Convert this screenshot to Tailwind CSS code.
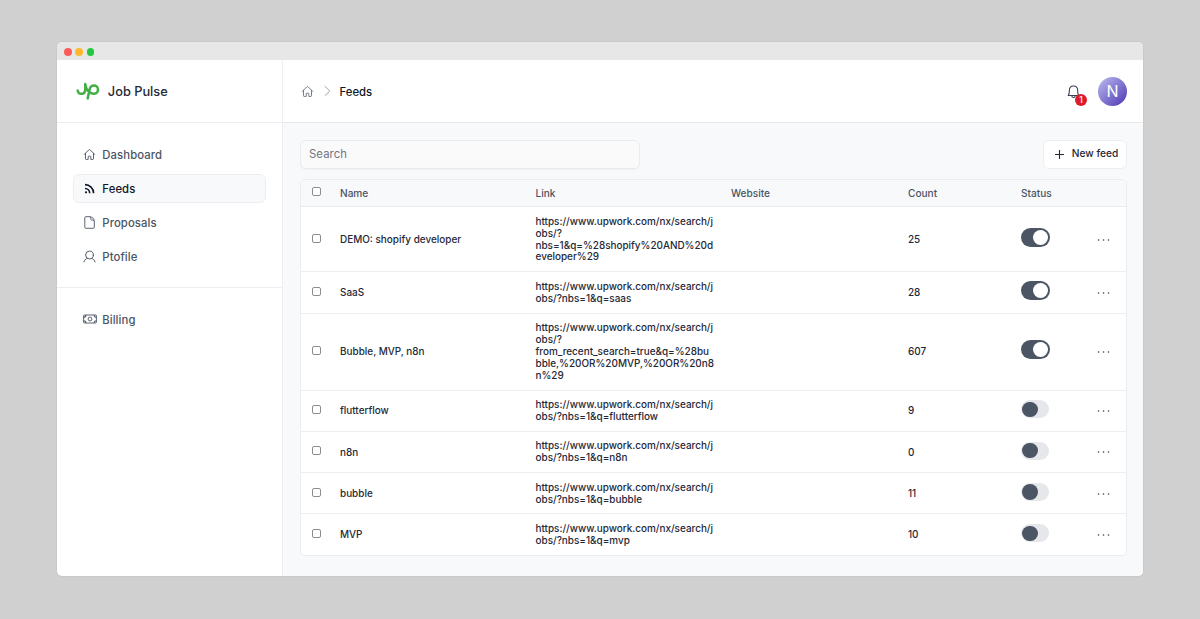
<!DOCTYPE html>
<html lang="en">
<head>
<meta charset="utf-8">
<title>Job Pulse</title>
<script src="https://cdn.jsdelivr.net/npm/@tailwindcss/browser@4"></script>
</head>
<body class="h-[619px] overflow-hidden bg-[#d0d0d0] px-[57px] pt-[42.4px] font-['Inter',sans-serif] text-[#1f2937]">
<svg class="hidden">
  <symbol id="home" viewBox="0 0 24 24"><path d="M2.5 11.8 10.6 3.6a2 2 0 0 1 2.8 0l8.1 8.2M4.6 9.8v10.1c0 .7.5 1.2 1.2 1.2h3.8v-4.9c0-.7.5-1.2 1.2-1.2h2.4c.7 0 1.2.5 1.2 1.2v4.9h3.8c.7 0 1.2-.5 1.2-1.2V9.8" fill="none" stroke="currentColor" stroke-width="1.7" stroke-linecap="round" stroke-linejoin="round"/></symbol>
</svg>
<div class="flex h-[534px] w-[1086.4px] flex-col overflow-hidden rounded-[5px] bg-white shadow-[0_0_2px_rgba(0,0,0,0.12)]">
  <div class="flex h-[18px] shrink-0 items-center gap-[3.8px] bg-[#e7e7e7] pt-[1px] pl-[7px]">
    <span class="size-[7.6px] rounded-full bg-[#fc5b57]"></span>
    <span class="size-[7.6px] rounded-full bg-[#fdb82d]"></span>
    <span class="size-[7.6px] rounded-full bg-[#24c83f]"></span>
  </div>
  <div class="flex min-h-0 flex-1">
    <aside class="flex w-[226px] shrink-0 flex-col border-r border-[#eceef1]">
      <div class="flex h-[63px] shrink-0 items-center border-b border-[#eceef1] pl-[19px]">
        <svg class="h-[18px] w-[24px]" viewBox="0 0 24 18" fill="none" stroke="#43ad46" stroke-width="2.5" stroke-linecap="round" stroke-linejoin="round"><path d="M1.7 8.6c.4 2.2 1.9 3.4 3.9 3.2 2.4-.2 3.6-1.9 3.6-4.4V2.1c.4 3 1.7 6 3.7 8M11.7 16.4l1.9-8.8c.6-2.6 2.1-4 4.3-4 2.3 0 4.1 1.7 4.1 4s-1.8 4.1-4.1 4.1c-2.1 0-3.9-1-5.2-2.7"/></svg>
        <span class="ml-[7.8px] pt-px text-[12.8px] leading-5 font-medium">Job Pulse</span>
      </div>
      <nav class="flex flex-col gap-[5px] px-[16px] pt-[17px] text-[11.3px] font-medium tracking-[0.1px] text-[#4b5563]">
        <a class="flex h-[29px] items-center pl-[10.3px]"><svg class="mr-[6px] size-[13px]"><use href="#home"/></svg><span class="pt-px">Dashboard</span></a>
        <a class="flex h-[29px] items-center rounded-[6px] border border-[#eceef1] bg-[#f8f9fb] pl-[9.3px] text-[#111827]"><svg class="mr-[6px] size-[13px]" viewBox="0 0 13 13" fill="none" stroke="currentColor" stroke-width="1.6"><path d="M2 6.5a4.7 4.7 0 0 1 4.7 4.7M2 2.6a8.6 8.6 0 0 1 8.6 8.6"/><circle cx="3" cy="10.3" r="1.1" fill="currentColor" stroke="none"/></svg><span class="pt-px">Feeds</span></a>
        <a class="flex h-[29px] items-center pl-[10.3px]"><svg class="mr-[6px] size-[13px]" viewBox="0 0 13 13" fill="none" stroke="currentColor" stroke-width=".9" stroke-linejoin="round"><path d="M2.8.7h3.7c2.8 0 4.8 2 4.8 4.8v5.8c0 .6-.4 1-1 1H2.8c-.6 0-1-.4-1-1V1.7c0-.6.4-1 1-1ZM6.5.7c.9.2 1.3.8 1.3 1.6v1c0 .5.3.8.8.8h1c.9 0 1.5.4 1.7 1.4"/></svg><span class="pt-px">Proposals</span></a>
        <a class="flex h-[29px] items-center pl-[10.3px]"><svg class="mr-[6px] size-[13px]" viewBox="0 0 13 13" fill="none" stroke="currentColor" stroke-width=".95" stroke-linecap="round"><circle cx="6.5" cy="5" r="3.9"/><path d="M.9 12c.5-1.8 1.7-3 3.3-3.7M12.1 12c-.5-1.8-1.7-3-3.3-3.7"/></svg><span class="pt-px">Ptofile</span></a>
      </nav>
      <div class="mt-[16px] border-t border-[#eceef1] px-[16px] pt-[16.6px] text-[11.3px] font-medium tracking-[0.1px] text-[#4b5563]">
        <a class="flex h-[29px] items-center pl-[9.6px]"><svg class="mr-[5.6px] h-[10px] w-[14px]" viewBox="0 0 14 10" fill="none" stroke="currentColor" stroke-width=".9"><rect x=".6" y="1" width="12.8" height="8" rx=".7"/><circle cx="7" cy="5" r="1.9"/><path d="M.6 3.3A2.3 2.3 0 0 0 2.9 1M13.4 3.3A2.3 2.3 0 0 1 11.1 1M.6 6.7A2.3 2.3 0 0 1 2.9 9M13.4 6.7A2.3 2.3 0 0 0 11.1 9" stroke-width="1.1"/></svg><span class="pt-[1.4px]">Billing</span></a>
      </div>
    </aside>
    <section class="flex min-w-0 flex-1 flex-col bg-[#f8f9fb]">
      <header class="flex h-[63px] shrink-0 items-center border-b border-[#e7e9ec] bg-white pr-[16.6px] pl-[17.6px]">
        <svg class="size-[13px] text-[#6b7280]"><use href="#home"/></svg>
        <svg class="mr-[9px] ml-[10px] h-[12px] w-[7px]" viewBox="0 0 7 12" fill="none" stroke="#9ca3af"><path d="m.8 1.2 5 4.8-5 4.8"/></svg>
        <span class="pt-[2px] text-[11.3px] font-medium text-[#111827]">Feeds</span>
        <div class="relative mr-[11.5px] ml-auto h-[13px] w-[20px]">
          <svg class="h-[14px] w-[13px]" viewBox="0 0 13 14" fill="none" stroke="#374151" stroke-width="1.1" stroke-linejoin="round"><path d="M1.2 10.5c1-1.1 1.2-2.1 1.2-5.2 0-2.7 1.5-4.3 4.1-4.3s4.1 1.6 4.1 4.3c0 3.1.2 4.1 1.2 5.2zM4.8 10.7c0 2.3 3.4 2.3 3.4 0"/></svg>
          <span class="absolute top-[9.3px] left-[8.5px] flex size-[11.5px] items-center justify-center rounded-full bg-[#dc1c2b] pt-[0.6px] text-[8.5px] leading-none font-medium text-white">1</span>
        </div>
        <span class="flex size-[28.5px] items-center justify-center rounded-full bg-linear-135 from-[#b3afe9] from-10% to-[#5a40b8] to-90% text-[16px] text-white">N</span>
      </header>
      <main class="flex flex-col pt-[16px] pr-[16.6px] pl-[17px]">
        <div class="flex h-[29.4px] items-center justify-between">
          <div class="flex h-[29px] w-[340px] items-center rounded-[6px] border border-[#e9ebee] bg-[#fafafa] pl-[8px] text-[11.3px] tracking-[0.1px] text-[#71757f] shadow-[0_1px_1px_rgba(0,0,0,0.03)]">Search</div>
          <button class="flex h-[29px] w-[84px] items-center rounded-[6px] border border-[#eceef1] bg-white pl-[11px] text-[10.2px] font-medium whitespace-nowrap text-[#1f2937]"><svg class="mr-[8px] size-[9px] shrink-0" viewBox="0 0 9 9" stroke="currentColor" stroke-width="1.1"><path d="M4.5 0v9M0 4.5h9"/></svg>New feed</button>
        </div>
        <div class="mt-[10px] overflow-hidden rounded-[5px] border border-[#eaecef] bg-white text-[9.95px] font-medium">
          <div class="grid h-[27.5px] grid-cols-[39px_195.5px_195.5px_177px_113px_1fr] items-center border-b border-[#e9ebee] bg-[#f8f9fb] text-[10.1px] leading-[14px] text-[#4b5563]">
            <span class="mb-[2.4px] ml-[10.5px] size-[9px] rounded-[2px] border border-[#8a8d92] bg-white"></span>
            <span>Name</span><span>Link</span><span>Website</span><span>Count</span><span>Status</span>
          </div>
          <div id="rows"></div>
        </div>
      </main>
    </section>
  </div>
</div>
<script>
const base = 'https://www.upwork.com/nx/search/j<br>obs/?';
const feeds = [
  ['DEMO: shopify developer', '<br>nbs=1&amp;q=%28shopify%20AND%20d<br>eveloper%29', 25, true],
  ['SaaS', 'nbs=1&amp;q=saas', 28, true],
  ['Bubble, MVP, n8n', '<br>from_recent_search=true&amp;q=%28bu<br>bble,%20OR%20MVP,%20OR%20n8<br>n%29', 607, true],
  ['flutterflow', 'nbs=1&amp;q=flutterflow', 9, false],
  ['n8n', 'nbs=1&amp;q=n8n', 0, false],
  ['bubble', 'nbs=1&amp;q=bubble', 11, false],
  ['MVP', 'nbs=1&amp;q=mvp', 10, false]
];
const on = '<span class="mb-[4px] flex h-[18.6px] w-[28.6px] items-center justify-end rounded-full bg-[#4b5563] pr-[2px]"><span class="size-[14.6px] rounded-full bg-white"></span></span>';
const off = '<span class="mb-[3px] flex h-[18px] w-[28px] items-center rounded-full bg-[#e5e7eb] pl-[1px]"><span class="size-[15.5px] rounded-full bg-[#4b5563]"></span></span>';
document.getElementById('rows').innerHTML = feeds.map(([name, query, count, active]) => `
  <div class="relative grid grid-cols-[39px_195.5px_195.5px_177px_113px_1fr] items-center border-b border-[#eceef1] pt-[8.5px] pb-[8.1px] last:border-b-0">
    <span class="mb-[3px] ml-[10.5px] size-[9px] rounded-[2px] border border-[#8a8d92]"></span>
    <span>${name}</span>
    <span class="text-[9.93px] leading-[11.86px] whitespace-nowrap">${base}${query}</span>
    <span></span>
    <span>${count}</span>
    ${active ? on : off}
    <svg class="absolute top-1/2 right-[16px] -mt-[0.5px] h-[2px] w-[13px]" viewBox="0 0 13 2" fill="#374151"><circle cx="1.5" cy="1" r=".8"/><circle cx="6.5" cy="1" r=".8"/><circle cx="11.5" cy="1" r=".8"/></svg>
  </div>`).join('');
</script>
</body>
</html>
